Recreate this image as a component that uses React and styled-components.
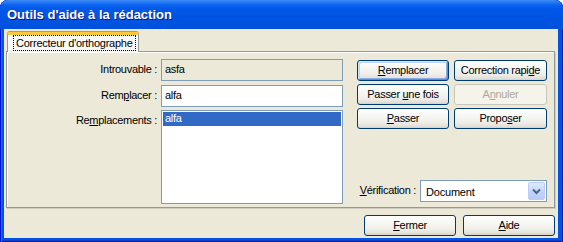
import React from "react";
import styled, { createGlobalStyle } from "styled-components";

const GlobalStyle = createGlobalStyle`
  html, body { margin: 0; padding: 0; background: #fff; }
  body { font-family: "Liberation Sans", Arial, sans-serif; }
  * { box-sizing: border-box; }
`;

const Window = styled.div`
  width: 563px;
  height: 242px;
  display: flex;
  flex-direction: column;
  background: #0054e3;
  border-radius: 8px 8px 0 0;
  overflow: hidden;
  box-shadow: inset 1px 0 0 #0019cf, inset 2px 0 0 #166aee, inset -1px 0 0 #001ea0,
    inset -2px 0 0 #0b4fd8, inset 0 -1px 0 #001ea0, inset 0 -2px 0 #0843c9;
`;

const TitleBar = styled.div`
  height: 29px;
  flex: none;
  display: flex;
  align-items: center;
  padding: 0 0 0 7px;
  background: linear-gradient(
    180deg,
    #3f8cf3 0px,
    #2a7cf8 2px,
    #0a62ef 5px,
    #0058e8 9px,
    #0054e3 16px,
    #0053df 24px,
    #0050d9 29px
  );
  border-radius: 8px 8px 0 0;
`;

const Title = styled.span`
  color: #fff;
  font: bold 13px "Liberation Sans", Arial, sans-serif;
  text-shadow: 1px 1px 0 #0a1883;
`;

const Client = styled.div`
  flex: 1;
  margin: 0 5px 4px 4px;
  background: #ece9d8;
  padding: 3px 3px 2px 2px;
  display: flex;
  flex-direction: column;
`;

const TabStrip = styled.div`
  display: flex;
  padding-left: 1px;
  position: relative;
  z-index: 1;
`;

const Tab = styled.div`
  height: 20px;
  width: 132px;
  margin-bottom: -1px;
  border: 1px solid #919b9c;
  border-bottom: none;
  border-top: 3px solid #ffc83c;
  border-radius: 3px 3px 0 0;
  box-shadow: 0 -1px 0 #e68b2c;
  background: linear-gradient(#fcfcfe, #f6f5f0);
  display: flex;
  align-items: flex-start;
  padding: 0 0 0 5px;
`;

const TabLabel = styled.span`
  font-size: 11px;
  letter-spacing: -0.25px;
  color: #000;
  border: 1px dotted #000;
  padding: 1px 2px;
  line-height: 12px;
`;

const Panel = styled.div`
  height: 157px;
  border: 1px solid #919b9c;
  background: #ece9d8;
  box-shadow: inset 1px 1px 0 #fdfdfb, 1px 1px 0 #d0cdbf;
  display: flex;
  padding: 7px 7px 3px 0;
`;

const FieldGrid = styled.div`
  display: grid;
  grid-template-columns: 151px 182px;
  grid-template-rows: 22px 22px 1fr;
  column-gap: 3px;
  row-gap: 4px;
`;

const Label = styled.label`
  font-size: 11px;
  letter-spacing: -0.3px;
  color: #000;
  text-align: right;
  align-self: ${(p) => (p.$top ? "start" : "center")};
  padding-top: ${(p) => (p.$top ? "3px" : "0")};
  padding-right: 1px;
  margin-top: ${(p) => (p.$top ? "0" : "-2px")};
  white-space: nowrap;
`;

const Field = styled.div`
  border: 1px solid #7f9db9;
  background: ${(p) => (p.$readonly ? "#ece9d8" : "#fff")};
  font-size: 11px;
  letter-spacing: -0.3px;
  padding: 0 3px 2px;
  display: flex;
  align-items: center;
  color: #000;
`;

const List = styled.div`
  border: 1px solid #7f9db9;
  background: #fff;
  padding: 1px;
  margin-top: -1px;
`;

const ListItem = styled.div`
  height: 14px;
  font-size: 11px;
  letter-spacing: -0.3px;
  line-height: 13px;
  padding-left: 2px;
  background: ${(p) => (p.$selected ? "#316ac5" : "transparent")};
  color: ${(p) => (p.$selected ? "#fff" : "#000")};
`;

const RightSide = styled.div`
  margin-left: 14px;
  flex: 1;
  display: flex;
  flex-direction: column;
  justify-content: space-between;
  padding-bottom: 2px;
`;

const ButtonGrid = styled.div`
  display: grid;
  grid-template-columns: 92px 93px;
  grid-auto-rows: 21px;
  column-gap: 5px;
  row-gap: 3px;
  margin-top: 1px;
`;

const Button = styled.button`
  height: 21px;
  width: ${(p) => p.$w || "auto"};
  padding: 0 0 1px;
  font: 11px "Liberation Sans", Arial, sans-serif;
  letter-spacing: -0.3px;
  color: ${(p) => (p.disabled ? "#aca899" : "#000")};
  border: 1px solid ${(p) => (p.disabled ? "#c9c7ba" : "#003c74")};
  border-radius: 3px;
  background: ${(p) =>
    p.disabled
      ? "#f5f4ea"
      : "linear-gradient(180deg, #ffffff 0%, #f7f7f4 35%, #efeee9 70%, #e3e1d8 90%, #d6d0c5 100%)"};
  box-shadow: ${(p) =>
    p.$default
      ? "inset 1px 1px 0 #cee7ff, inset -1px -1px 0 #6982ee, inset 2px 2px 0 #bcd4f6, inset -2px -2px 0 #89ade4"
      : "none"};
  text-align: center;
  line-height: 17px;
  u { text-underline-offset: 1px; }
`;

const VerifRow = styled.div`
  display: flex;
  align-items: center;
  justify-content: flex-end;
  gap: 3px;
`;

const Select = styled.div`
  width: 127px;
  height: 22px;
  border: 1px solid #7f9db9;
  background: #fff;
  display: flex;
  align-items: center;
  padding: 1px;
`;

const SelectText = styled.span`
  flex: 1;
  font-size: 11px;
  letter-spacing: -0.2px;
  padding-left: 4px;
  padding-top: 1px;
`;

const DropButton = styled.div`
  width: 17px;
  height: 18px;
  border-radius: 2px;
  border: 1px solid #bacff8;
  background: linear-gradient(180deg, #e0e9fd 0%, #c5d6fb 50%, #b7cbf6 100%);
  display: flex;
  align-items: center;
  justify-content: center;
`;

const Footer = styled.div`
  display: flex;
  justify-content: flex-end;
  gap: 7px;
  margin-top: 7px;
`;

export default function App() {
  return (
    <>
      <GlobalStyle />
      <Window>
        <TitleBar>
          <Title>Outils d'aide à la rédaction</Title>
        </TitleBar>
        <Client>
          <TabStrip>
            <Tab>
              <TabLabel>Correcteur d'orthographe</TabLabel>
            </Tab>
          </TabStrip>
          <Panel>
            <FieldGrid>
              <Label>Introuvable :</Label>
              <Field $readonly>asfa</Field>
              <Label>
                Rem<u>p</u>lacer :
              </Label>
              <Field>alfa</Field>
              <Label $top>
                Re<u>m</u>placements :
              </Label>
              <List>
                <ListItem $selected>alfa</ListItem>
              </List>
            </FieldGrid>
            <RightSide>
              <ButtonGrid>
                <Button $default>
                  <u>R</u>emplacer
                </Button>
                <Button>
                  Correction rapi<u>d</u>e
                </Button>
                <Button>
                  Passer <u>u</u>ne fois
                </Button>
                <Button disabled>
                  A<u>n</u>nuler
                </Button>
                <Button>
                  <u>P</u>asser
                </Button>
                <Button>
                  Propo<u>s</u>er
                </Button>
              </ButtonGrid>
              <VerifRow>
                <Label>
                  <u>V</u>érification :
                </Label>
                <Select>
                  <SelectText>Document</SelectText>
                  <DropButton>
                    <svg width="9" height="7" viewBox="0 0 9 7">
                      <path d="M1 1.5 L4.5 5 L8 1.5" fill="none" stroke="#4d6185" strokeWidth="2" />
                    </svg>
                  </DropButton>
                </Select>
              </VerifRow>
            </RightSide>
          </Panel>
          <Footer>
            <Button $w="92px">
              <u>F</u>ermer
            </Button>
            <Button $w="92px">
              <u>A</u>ide
            </Button>
          </Footer>
        </Client>
      </Window>
    </>
  );
}
